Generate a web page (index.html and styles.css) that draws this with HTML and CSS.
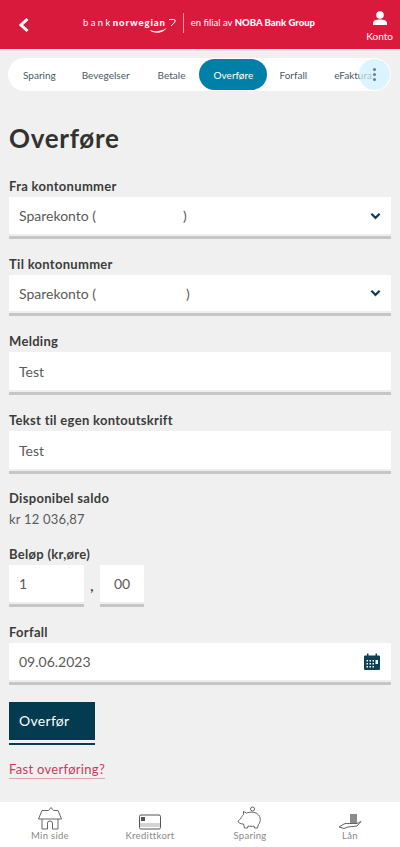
FILE: index.html
```html
<!DOCTYPE html>
<html lang="no">
<head>
    <meta charset="UTF-8">
    <meta name="viewport" content="width=device-width, initial-scale=1.0">
    <title>Overføre</title>
    <link rel="stylesheet" href="styles.css">
</head>
<body>
    <header class="topbar">
        <svg class="back" viewBox="0 0 12 16" width="12" height="16"><path d="M9.500 2 3 8l6.500 6" fill="none" stroke="#fff" stroke-width="3"/></svg>
        <div class="brand">
            <span class="brand-name">bank<b>norwegian</b></span>
            <svg class="swoosh" viewBox="0 0 27 20" width="27" height="20"><path d="M19 1.500h4.500q2.500 0 1.500 2-1.200 2.500-4 4.500" fill="none" stroke="#fff" stroke-width="1"/><path d="M0 12q1 2 6 2.800 6 .5 11-4.800-5 3.200-10 3.200-4 0-7-1.200z" fill="#fff"/></svg>
            <span class="brand-line"></span>
            <span class="brand-sub">en filial av <b>NOBA Bank Group</b></span>
        </div>
        <div class="account">
            <svg viewBox="0 0 16 14" width="16" height="14"><circle cx="8" cy="4" r="3.800" fill="#fff"/><path d="M1 14v-2c0-2.500 3-3.500 7-3.500s7 1 7 3.500v2z" fill="#fff"/></svg>
            <span>Konto</span>
        </div>
    </header>

    <nav class="tabs">
        <ul>
            <li>Sparing</li>
            <li>Bevegelser</li>
            <li>Betale</li>
            <li class="active">Overføre</li>
            <li>Forfall</li>
            <li>eFaktura</li>
        </ul>
        <div class="more"><i></i><i></i><i></i></div>
    </nav>

    <main>
        <h1>Overføre</h1>

        <div class="field">
            <label>Fra kontonummer</label>
            <div class="input select"><span>Sparekonto (<span class="blank-a"></span>)</span>
                <svg viewBox="0 0 12 8" width="11" height="8"><path d="M1.500 1.500 6 6l4.500-4.500" fill="none" stroke="#0d3f56" stroke-width="2.400"/></svg>
            </div>
        </div>

        <div class="field">
            <label>Til kontonummer</label>
            <div class="input select short"><span>Sparekonto (<span class="blank-b"></span>)</span>
                <svg viewBox="0 0 12 8" width="11" height="8"><path d="M1.500 1.500 6 6l4.500-4.500" fill="none" stroke="#0d3f56" stroke-width="2.400"/></svg>
            </div>
        </div>

        <div class="field">
            <label>Melding</label>
            <div class="input tall">Test</div>
        </div>

        <div class="field tight">
            <label>Tekst til egen kontoutskrift</label>
            <div class="input tall">Test</div>
        </div>

        <div class="saldo">
            <label>Disponibel saldo</label>
            <p>kr 12 036,87</p>
        </div>

        <div class="field amount">
            <label>Beløp (kr,øre)</label>
            <div class="amount-row">
                <div class="input kr">1</div>
                <span class="comma">,</span>
                <div class="input ore">00</div>
            </div>
        </div>

        <div class="field">
            <label>Forfall</label>
            <div class="input select"><span>09.06.2023</span>
                <svg viewBox="0 0 18 18" width="18" height="18">
                    <path d="M1 3.500q0-1 1-1h2V.5h1.500v2h7V.5H14v2h2q1 0 1 1V16q0 1-1 1H2q-1 0-1-1z" fill="#0d3f56"/>
                    <path d="M3.500 7h1.500v1.500H3.500zM6.500 7H8v1.500H6.500zM9.500 7H11v1.500H9.500zM3.500 10h1.500v1.500H3.500zM6.500 10H8v1.500H6.500zM9.500 10H11v1.500H9.500zM3.500 13h1.500v1.500H3.500zM6.500 13H8v1.500H6.500zM9.500 13H11v1.500H9.500zM12.500 7H15v4h-2.500z" fill="#fff"/>
                </svg>
            </div>
        </div>

        <button class="submit">Overfør</button>
        <a class="fast-link" href="#">Fast overføring?</a>
    </main>

    <footer class="bottom-nav">
        <div class="bottom-item">
            <svg viewBox="0 0 26 24" width="26" height="24"><path d="M1.500 13 5 4.500h6.500L14 1.500l2.500 3H21l3.500 8.500zM5 13v10h5.500v-6q0-2 2.500-2t2.500 2v6H21V13" fill="none" stroke="#666" stroke-width="1"/></svg>
            <span>Min side</span>
        </div>
        <div class="bottom-item">
            <svg viewBox="0 0 24 16" width="24" height="16"><rect x="1.500" y="1" width="21" height="14" rx="1.500" fill="none" stroke="#555"/><rect x="3" y="3" width="4" height="4" fill="#555"/><path d="M2 10h20M2 12h20" stroke="#aaa"/></svg>
            <span>Kredittkort</span>
        </div>
        <div class="bottom-item">
            <svg viewBox="0 0 26 24" width="26" height="24"><path d="M1.500 15c0-1 1-1.500 2-2 1-2 2-3.500 3-4.500V5.500l3 1.500c3-1 8-1.500 11 1 3.500 2.500 3.500 7.500 1 10.500l-1 3.500h-3l-.5-2c-2 .5-4 .5-6 0l-.5 2h-3l-1-4c-2.500 0-5.500-1-5.500-3z" fill="none" stroke="#666"/><circle cx="15.500" cy="3" r="2" fill="none" stroke="#666"/></svg>
            <span>Sparing</span>
        </div>
        <div class="bottom-item">
            <svg viewBox="0 0 24 18" width="24" height="18"><path d="M1 15l5-3q2-1 4-.5h9l4-2-4 4.500-9 1-4 1.500z" fill="#fff" stroke="#666"/><path d="M12 3h7M12 5h7M12 7h7M12 9h7M12 11h7" stroke="#666" stroke-width="1.300"/></svg>
            <span>Lån</span>
        </div>
    </footer>
</body>
</html>
```

FILE: styles.css
```css
* {
    margin: 0;
    padding: 0;
    box-sizing: border-box;
    font-family: 'Lato', sans-serif;
}

body {
    background: #f0f0f0;
    color: #3a3a3a;
    height: 847px;
    overflow: hidden;
    display: flex;
    flex-direction: column;
}

.topbar {
    background: #d91a3c;
    color: #fff;
    height: 49px;
    flex-shrink: 0;
    display: flex;
    align-items: center;
    padding: 0 7px 0 18px;
}

.brand {
    display: flex;
    align-items: center;
    margin-left: 53px;
    margin-top: -5px;
    flex: 1;
}

.brand-name {
    font-size: 9.500px;
    font-weight: 400;
    letter-spacing: 2.400px;
    white-space: nowrap;
}

.brand-name b {
    font-weight: 900;
    letter-spacing: 0.9px;
}

.swoosh {
    margin: 12px 0 0 -16px;
}

.brand-line {
    width: 1px;
    height: 20px;
    background: #f09aaa;
    margin: 1px 7px 0 6px;
}

.brand-sub {
    white-space: nowrap;
    font-size: 9.500px;
}

.brand-sub b {
    font-weight: 900;
}

.account {
    display: flex;
    flex-direction: column;
    align-items: center;
    gap: 5px;
    font-size: 10px;
    margin-top: 4px;
}

.tabs {
    position: relative;
    margin: 9px 9px 0 8px;
    height: 33px;
    background: #fff;
    border-radius: 17px;
    flex-shrink: 0;
    overflow: hidden;
}

.tabs ul {
    list-style: none;
    display: flex;
    align-items: center;
    height: 100%;
    font-size: 10px;
    color: #4a5a63;
}

.tabs li {
    white-space: nowrap;
}

.tabs li:nth-child(1) { margin-left: 15px; }
.tabs li:nth-child(2) { margin-left: 26px; }
.tabs li:nth-child(3) { margin-left: 28px; }
.tabs li:nth-child(5) { margin-left: 12px; }
.tabs li:nth-child(6) { margin-left: 27px; }

.tabs .active {
    background: #0080a8;
    color: #fff;
    width: 68px;
    height: 31px;
    border-radius: 16px;
    display: flex;
    align-items: center;
    justify-content: center;
    margin-left: 14px;
}

.more {
    position: absolute;
    right: 1px;
    top: 1px;
    width: 31px;
    height: 31px;
    border-radius: 50%;
    background: rgba(205, 240, 252, 0.7);
    display: flex;
    flex-direction: column;
    align-items: center;
    justify-content: center;
    gap: 2px;
}

.more i {
    width: 3px;
    height: 3px;
    border-radius: 50%;
    background: #6b7f8a;
}

main {
    flex: 1;
    padding: 0 9px;
}

h1 {
    font-size: 26px;
    font-weight: 700;
    line-height: 32px;
    margin-top: 31px;
    margin-bottom: 24px;
    letter-spacing: 0.7px;
    color: #33322f;
}

label {
    display: block;
    font-size: 13px;
    font-weight: 700;
    line-height: 16px;
    color: #3c3c3c;
    letter-spacing: 0.3px;
}

.field {
    margin-bottom: 17px;
}

.tight {
    margin-bottom: 16px;
}

.input {
    background: #fff;
    height: 42px;
    margin-top: 3px;
    padding: 0 10px 2px;
    display: flex;
    align-items: center;
    font-size: 14px;
    color: #5a5a5a;
    border-bottom: 3px solid #c6c6c6;
    box-shadow: inset 0 -2px 0 #eee;
}

.select {
    justify-content: space-between;
}

.select svg {
    flex-shrink: 0;
}

.short {
    height: 41px;
}

.tall {
    height: 43px;
}

.blank-a {
    display: inline-block;
    width: 87px;
}

.blank-b {
    display: inline-block;
    width: 90px;
}

.saldo {
    margin-bottom: 19px;
}

.saldo p {
    font-size: 13px;
    line-height: 16px;
    margin-top: 5px;
    color: #5a5a5a;
    letter-spacing: 0.2px;
}

.amount-row {
    display: flex;
    align-items: flex-start;
}

.kr {
    width: 75px;
}

.ore {
    width: 44px;
    justify-content: center;
    padding: 0 0 3px;
}

.comma {
    width: 16px;
    text-align: center;
    font-size: 14px;
    font-weight: 700;
    margin-top: 15px;
}

.submit {
    display: block;
    width: 86px;
    height: 43px;
    background: #033b50;
    border: none;
    border-bottom: 2px solid #033b50;
    box-shadow: inset 0 -3px 0 #f0f0f0, inset 0 0 0 1px #033b50;
    color: #fff;
    font-size: 14px;
    text-align: left;
    padding: 0 10px 5px;
    letter-spacing: 0.3px;
}

.fast-link {
    display: inline-block;
    margin-top: 16px;
    font-size: 13px;
    line-height: 17px;
    color: #cc3a58;
    text-decoration: none;
    border-bottom: 1px solid #e0a0ae;
    letter-spacing: 0.3px;
}

.bottom-nav {
    background: #fff;
    height: 45px;
    flex-shrink: 0;
    display: grid;
    grid-template-columns: repeat(4, 1fr);
    padding: 0 0 1px;
}

.bottom-item {
    display: flex;
    flex-direction: column;
    align-items: center;
    justify-content: flex-end;
    font-size: 9.500px;
    color: #888;
    letter-spacing: 0.3px;
    line-height: 12px;
    padding-bottom: 4px;
}
```
